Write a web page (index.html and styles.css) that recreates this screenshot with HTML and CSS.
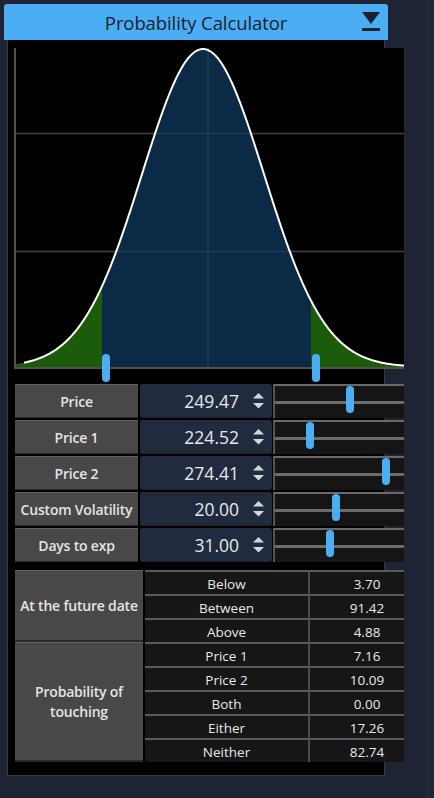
FILE: index.html
```html
<!DOCTYPE html>
<html>
<head>
<meta charset="utf-8">
<title>Probability Calculator</title>
<link rel="stylesheet" href="styles.css">
</head>
<body>
<div class="app">
  <div class="viewport">
    <div class="window">
      <div class="titlebar">
        <span class="title">Probability Calculator</span>
        <svg class="collapse" width="18" height="20" viewBox="0 0 18 20">
          <polygon points="0,0 18,0 9,12" fill="#1a2232"/>
          <rect x="0" y="16" width="18" height="3" fill="#1a2232"/>
        </svg>
      </div>
      <div class="panel">
        <div class="content">
          <svg class="chart" width="390" height="336" viewBox="0 0 390 336">
            <rect class="plot-bg" x="0" y="0" width="390" height="321"/>
            <g class="grid">
              <line x1="2" y1="85.5" x2="390" y2="85.5"/>
              <line x1="2" y1="203.5" x2="390" y2="203.5"/>
              <line x1="194" y1="0" x2="194" y2="319"/>
            </g>
            <path id="tail-left" class="tail" d=""/>
            <path id="body" class="body" d=""/>
            <path id="tail-right" class="tail" d=""/>
            <path id="curve" class="curve" d=""/>
            <line class="axis" x1="1" y1="0" x2="1" y2="321"/>
            <line class="axis" x1="0" y1="320" x2="390" y2="320"/>
            <rect class="marker" x="88" y="306" width="8" height="28" rx="4"/>
            <rect class="marker" x="298" y="306" width="8" height="28" rx="4"/>
          </svg>

          <div class="inputs">
            <div class="row">
              <div class="label">Price</div>
              <div class="spin"><span class="val">249.47</span>
                <svg class="arrows" width="11" height="16" viewBox="0 0 11 16"><polygon points="0,5.5 5.5,0 11,5.5"/><polygon points="0,10 11,10 5.5,15.5"/></svg>
              </div>
              <div class="slider"><div class="track"></div><div class="thumb" style="left:71px"></div></div>
            </div>
            <div class="row">
              <div class="label">Price 1</div>
              <div class="spin"><span class="val">224.52</span>
                <svg class="arrows" width="11" height="16" viewBox="0 0 11 16"><polygon points="0,5.5 5.5,0 11,5.5"/><polygon points="0,10 11,10 5.5,15.5"/></svg>
              </div>
              <div class="slider"><div class="track"></div><div class="thumb" style="left:31px"></div></div>
            </div>
            <div class="row">
              <div class="label">Price 2</div>
              <div class="spin"><span class="val">274.41</span>
                <svg class="arrows" width="11" height="16" viewBox="0 0 11 16"><polygon points="0,5.5 5.5,0 11,5.5"/><polygon points="0,10 11,10 5.5,15.5"/></svg>
              </div>
              <div class="slider"><div class="track"></div><div class="thumb" style="left:107px"></div></div>
            </div>
            <div class="row">
              <div class="label">Custom Volatility</div>
              <div class="spin"><span class="val">20.00</span>
                <svg class="arrows" width="11" height="16" viewBox="0 0 11 16"><polygon points="0,5.5 5.5,0 11,5.5"/><polygon points="0,10 11,10 5.5,15.5"/></svg>
              </div>
              <div class="slider"><div class="track"></div><div class="thumb" style="left:57px"></div></div>
            </div>
            <div class="row">
              <div class="label">Days to exp</div>
              <div class="spin"><span class="val">31.00</span>
                <svg class="arrows" width="11" height="16" viewBox="0 0 11 16"><polygon points="0,5.5 5.5,0 11,5.5"/><polygon points="0,10 11,10 5.5,15.5"/></svg>
              </div>
              <div class="slider"><div class="track"></div><div class="thumb" style="left:51px"></div></div>
            </div>
          </div>

          <div class="results">
            <div class="group g1">At the future date</div>
            <div class="cell name">Below</div><div class="cell num">3.70</div>
            <div class="cell name">Between</div><div class="cell num">91.42</div>
            <div class="cell name">Above</div><div class="cell num">4.88</div>
            <div class="group g2">Probability of<br>touching</div>
            <div class="cell name">Price 1</div><div class="cell num">7.16</div>
            <div class="cell name">Price 2</div><div class="cell num">10.09</div>
            <div class="cell name">Both</div><div class="cell num">0.00</div>
            <div class="cell name">Either</div><div class="cell num">17.26</div>
            <div class="cell name">Neither</div><div class="cell num">82.74</div>
          </div>
        </div>
      </div>
    </div>
  </div>
  <div class="fill"></div>
  <div class="strip"></div>
</div>
<script src="script.js"></script>
</body>
</html>
```

FILE: styles.css
```css
* { box-sizing: border-box; margin: 0; padding: 0; }
html, body { width: 434px; height: 798px; overflow: hidden; }
body {
  background: #1e2433;
  font-family: "Open Sans", "Noto Sans", sans-serif;
  color: #e6e6e6;
}
.app { display: flex; width: 434px; height: 798px; }
.viewport {
  width: 404px;
  height: 798px;
  flex: none;
  overflow: hidden;
  padding: 4px 0 0 4px;
}
.fill { flex: 1; }
.strip { width: 6px; border-left: 1px solid #293040; background: #1f2535; }

.window { width: 384px; }
.titlebar {
  position: relative;
  height: 36px;
  background: #4baef2;
  border-radius: 3px 3px 0 0;
  display: flex;
  align-items: center;
  justify-content: center;
  color: #1a2232;
  font-size: 18.5px;
  letter-spacing: -0.1px;
}
.title { margin-top: 1px; }
.collapse { position: absolute; right: 8px; top: 8px; }

.panel {
  margin-left: 3px;
  width: 378px;
  height: 736px;
  background: #000;
  border: 1px solid #3a3a3a;
  border-top: none;
  padding: 8px 0 0 6px;
}
.content { width: 410px; }

.chart { display: block; }
.plot-bg { fill: #000; }
.grid line { stroke: #424242; stroke-width: 1.5; }
.body { fill: rgb(14, 58, 96); fill-opacity: 0.72; }
.tail { fill: rgb(36, 128, 14); fill-opacity: 0.72; }
.curve { fill: none; stroke: #fff; stroke-width: 2; }
.axis { stroke: #505050; stroke-width: 2; }
.marker { fill: #4aaef2; }

.inputs {
  display: flex;
  flex-direction: column;
  gap: 2px;
  padding-left: 1px;
}
.row { display: flex; height: 34px; }
.row > * { flex: none; }
.label {
  width: 123px;
  background: #484848;
  border-top: 1px solid #616161;
  border-bottom: 1px solid #2c2c2c;
  display: flex;
  align-items: center;
  justify-content: center;
  font-weight: 600;
  font-size: 14px;
  color: #e4e4e4;
  letter-spacing: -0.2px;
}
.spin {
  margin-left: 2px;
  width: 132px;
  background: #212b3f;
  border-radius: 3px;
  border-bottom: 1px solid #1a2232;
  display: flex;
  align-items: center;
  justify-content: flex-end;
  padding-right: 8px;
}
.val { font-size: 17.5px; color: #e8e8e8; margin-right: 14px; }
.arrows { display: block; }
.arrows polygon { fill: #d6d6d6; }
.slider {
  position: relative;
  margin-left: 1px;
  width: 160px;
  background: #151515;
  border-top: 2px solid #6a6a6a;
  border-left: 2px solid #555;
}
.track {
  position: absolute;
  left: 0; right: 0;
  top: 15px;
  height: 3px;
  background: #6b6b6b;
}
.thumb {
  position: absolute;
  top: 0;
  width: 8px;
  height: 27px;
  border-radius: 4px;
  background: #4aaef2;
}

.results {
  margin-top: 8px;
  margin-left: 1px;
  display: grid;
  grid-template-columns: 128px 163px 114px;
  grid-auto-rows: 24px;
  column-gap: 2px;
}
.group {
  grid-column: 1;
  background: #484848;
  border-top: 1px solid #616161;
  border-bottom: 2px solid #2a2a2a;
  display: flex;
  align-items: center;
  justify-content: center;
  text-align: center;
  font-weight: 600;
  font-size: 14px;
  line-height: 20px;
  color: #e4e4e4;
  letter-spacing: -0.2px;
}
.g1 { grid-row: 1 / span 3; }
.g2 { grid-row: 4 / span 5; }
.cell {
  background: #161616;
  border-top: 2px solid #5a5a5a;
  display: flex;
  align-items: center;
  justify-content: center;
  font-size: 13.5px;
  color: #e8e8e8;
  padding-top: 1px;
}
.name { grid-column: 2; }
.num { grid-column: 3; margin-left: -2px; border-left: 2px solid #4a4a4a; }
```

FILE: script.js
```js
(function () {
  var mean = 189, sd = 61, base = 319, amp = 318;
  function y(x) { return base - amp * Math.exp(-0.5 * Math.pow((x - mean) / sd, 2)); }
  function area(x0, x1) {
    var d = 'M' + x0 + ',' + base;
    for (var x = x0; x < x1; x += 1) d += 'L' + x + ',' + y(x).toFixed(2);
    d += 'L' + x1 + ',' + y(x1).toFixed(2) + 'L' + x1 + ',' + base + 'Z';
    return d;
  }
  function line(x0, x1) {
    var d = 'M' + x0 + ',' + y(x0).toFixed(2);
    for (var x = x0 + 1; x <= x1; x += 1) d += 'L' + x + ',' + y(x).toFixed(2);
    return d;
  }
  document.getElementById('tail-left').setAttribute('d', area(2, 88));
  document.getElementById('body').setAttribute('d', area(88, 297));
  document.getElementById('tail-right').setAttribute('d', area(297, 390));
  document.getElementById('curve').setAttribute('d', line(10, 390));
})();
```
